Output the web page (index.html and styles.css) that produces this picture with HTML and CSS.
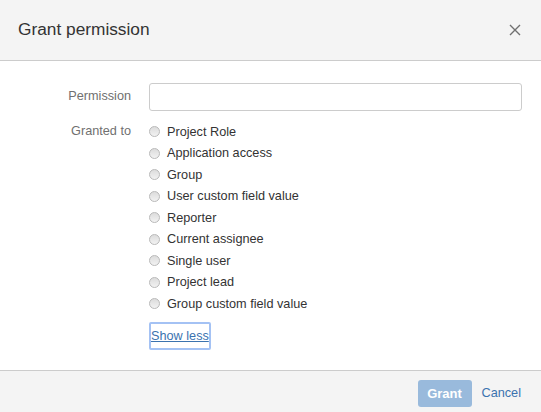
FILE: index.html
```html
<!DOCTYPE html>
<html>
<head>
<meta charset="utf-8">
<link rel="stylesheet" href="styles.css">
</head>
<body>
<div class="dialog">
  <header class="dialog-header">
    <h2 class="dialog-title">Grant permission</h2>
    <button class="close-btn" aria-label="Close">
      <svg width="12" height="12" viewBox="0 0 12 12"><path d="M1 1L11 11M11 1L1 11" stroke="#707070" stroke-width="1.4" fill="none"/></svg>
    </button>
  </header>
  <main class="dialog-body">
    <div class="form-row row-permission">
      <label class="field-label">Permission</label>
      <input class="text-input" type="text">
    </div>
    <div class="form-row">
      <div class="field-label label-granted">Granted to</div>
      <div class="field-group">
        <ul class="radio-list">
          <li class="radio-item"><span class="radio"></span>Project Role</li>
          <li class="radio-item"><span class="radio"></span>Application access</li>
          <li class="radio-item"><span class="radio"></span>Group</li>
          <li class="radio-item"><span class="radio"></span>User custom field value</li>
          <li class="radio-item"><span class="radio"></span>Reporter</li>
          <li class="radio-item"><span class="radio"></span>Current assignee</li>
          <li class="radio-item"><span class="radio"></span>Single user</li>
          <li class="radio-item"><span class="radio"></span>Project lead</li>
          <li class="radio-item"><span class="radio"></span>Group custom field value</li>
        </ul>
        <a class="show-less" href="#">Show less</a>
      </div>
    </div>
  </main>
  <footer class="dialog-footer">
    <button class="btn-grant">Grant</button>
    <a class="cancel-link" href="#">Cancel</a>
  </footer>
</div>
</body>
</html>
```

FILE: styles.css
```css
html, body {
  margin: 0;
  padding: 0;
}
body {
  font-family: "Liberation Sans", Arial, sans-serif;
  color: #333;
  background: #fff;
}
.dialog {
  width: 541px;
  height: 412px;
  display: flex;
  flex-direction: column;
  background: #fff;
}
.dialog-header {
  height: 60px;
  flex: none;
  background: #f4f4f4;
  border-bottom: 1px solid #cccccc;
  display: flex;
  align-items: center;
  justify-content: space-between;
  padding: 0 20px 0 18px;
}
.dialog-title {
  margin: 0;
  font-size: 17.3px;
  font-weight: normal;
  color: #333;
  padding-bottom: 1px;
}
.close-btn {
  border: 0;
  background: none;
  padding: 0;
  width: 12px;
  height: 12px;
  display: flex;
}
.dialog-body {
  flex: 1;
  padding: 22px 19px 0 0;
}
.form-row {
  display: grid;
  grid-template-columns: 131px 1fr;
  column-gap: 18px;
  font-size: 12.7px;
}
.row-permission {
  margin-bottom: 10px;
}
.field-label {
  text-align: right;
  color: #707070;
  line-height: 27px;
}
.label-granted {
  line-height: 21.5px;
}
.text-input {
  box-sizing: border-box;
  height: 28px;
  width: 100%;
  border: 1px solid #cccccc;
  border-radius: 3px;
  margin: 0;
  padding: 0 6px;
  font: inherit;
}
.field-group {
  display: flex;
  flex-direction: column;
  align-items: flex-start;
}
.radio-list {
  list-style: none;
  margin: 0;
  padding: 0;
}
.radio-item {
  height: 21.5px;
  display: flex;
  align-items: center;
  color: #333;
}
.radio {
  box-sizing: border-box;
  width: 11px;
  height: 11px;
  border-radius: 50%;
  border: 1px solid #b9b9b9;
  background: linear-gradient(#dcdcdc, #f2f2f2);
  margin: 0 7px 0 0;
  flex: none;
}
.show-less {
  margin-top: 7px;
  box-sizing: border-box;
  height: 28px;
  line-height: 24px;
  border: 2px solid #a4c2f4;
  border-radius: 2px;
  padding: 0;
  color: #3b73af;
  text-decoration: underline;
  font-size: 12.7px;
}
.dialog-footer {
  height: 41px;
  flex: none;
  background: #f4f4f4;
  border-top: 1px solid #cccccc;
  display: flex;
  align-items: center;
  justify-content: flex-end;
  padding: 0 20px 0 0;
}
.btn-grant {
  height: 27px;
  width: 54px;
  border: 0;
  border-radius: 3px;
  background: #99badc;
  color: #fff;
  font: bold 13px "Liberation Sans", Arial, sans-serif;
  padding: 0;
  margin-top: 3px;
}
.cancel-link {
  margin-left: 10px;
  margin-top: 3px;
  color: #3b73af;
  text-decoration: none;
  font-size: 12.7px;
}
```
